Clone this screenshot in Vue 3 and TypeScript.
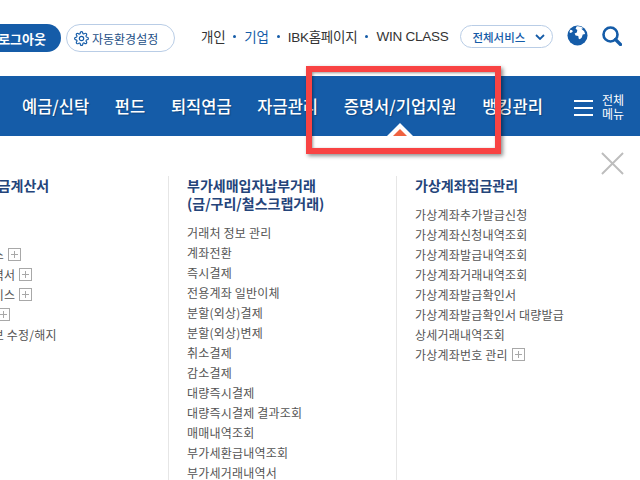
<script setup lang="ts">
interface MenuItem {
  name: string;
  more?: boolean;
}

interface MenuColumn {
  title: string[];
  items: MenuItem[];
}

const navItems = ['예금/신탁', '펀드', '퇴직연금', '자금관리', '증명서/기업지원', '뱅킹관리'];

const columns: MenuColumn[] = [
  {
    title: ['전자세금계산서'],
    items: [
      { name: '발행' },
      { name: '조회' },
      { name: '웹서비스', more: true },
      { name: '거래내역서', more: true },
      { name: '전자서비스', more: true },
      { name: '담당자', more: true },
      { name: '기본정보 수정/해지' },
    ],
  },
  {
    title: ['부가세매입자납부거래', '(금/구리/철스크랩거래)'],
    items: [
      { name: '거래처 정보 관리' },
      { name: '계좌전환' },
      { name: '즉시결제' },
      { name: '전용계좌 일반이체' },
      { name: '분할(외상)결제' },
      { name: '분할(외상)변제' },
      { name: '취소결제' },
      { name: '감소결제' },
      { name: '대량즉시결제' },
      { name: '대량즉시결제 결과조회' },
      { name: '매매내역조회' },
      { name: '부가세환급내역조회' },
      { name: '부가세거래내역서' },
    ],
  },
  {
    title: ['가상계좌집금관리'],
    items: [
      { name: '가상계좌추가발급신청' },
      { name: '가상계좌신청내역조회' },
      { name: '가상계좌발급내역조회' },
      { name: '가상계좌거래내역조회' },
      { name: '가상계좌발급확인서' },
      { name: '가상계좌발급확인서 대량발급' },
      { name: '상세거래내역조회' },
      { name: '가상계좌번호 관리', more: true },
    ],
  },
];
</script>

<template>
  <div class="page">
    <!-- Top utility bar -->
    <header class="top">
      <button type="button" class="logout">로그아웃</button>
      <button type="button" class="settings">
        <svg class="gear" viewBox="0 0 24 24" fill="none" stroke="#155ca8" stroke-width="1.9">
          <circle cx="12" cy="12" r="3.5" />
          <path d="M19.4 15a1.65 1.65 0 0 0 .33 1.82l.06.06a2 2 0 0 1 0 2.83 2 2 0 0 1-2.83 0l-.06-.06a1.65 1.65 0 0 0-1.82-.33 1.65 1.65 0 0 0-1 1.51V21a2 2 0 0 1-2 2 2 2 0 0 1-2-2v-.09A1.65 1.65 0 0 0 9 19.4a1.65 1.65 0 0 0-1.82.33l-.06.06a2 2 0 0 1-2.83 0 2 2 0 0 1 0-2.83l.06-.06a1.65 1.65 0 0 0 .33-1.82 1.65 1.65 0 0 0-1.51-1H3a2 2 0 0 1-2-2 2 2 0 0 1 2-2h.09A1.65 1.65 0 0 0 4.6 9a1.65 1.65 0 0 0-.33-1.82l-.06-.06a2 2 0 0 1 0-2.83 2 2 0 0 1 2.83 0l.06.06a1.65 1.65 0 0 0 1.82.33H9a1.65 1.65 0 0 0 1-1.51V3a2 2 0 0 1 2-2 2 2 0 0 1 2 2v.09a1.65 1.65 0 0 0 1 1.51 1.65 1.65 0 0 0 1.82-.33l.06-.06a2 2 0 0 1 2.83 0 2 2 0 0 1 0 2.83l-.06.06a1.65 1.65 0 0 0-.33 1.82V9a1.65 1.65 0 0 0 1.51 1H21a2 2 0 0 1 2 2 2 2 0 0 1-2 2h-.09a1.65 1.65 0 0 0-1.51 1z" />
        </svg>
        <span>자동환경설정</span>
      </button>
      <nav class="links">
        <a>개인</a>
        <i class="dot"></i>
        <a class="on">기업</a>
        <i class="dot"></i>
        <a>IBK홈페이지</a>
        <i class="dot"></i>
        <a>WIN CLASS</a>
      </nav>
      <button type="button" class="services">
        <span>전체서비스</span>
        <svg viewBox="0 0 10 6" class="chev" fill="none" stroke="#155ca8" stroke-width="1.8">
          <polyline points="1 1 5 5 9 1" />
        </svg>
      </button>
      <svg class="globe" viewBox="0 0 22 22">
        <circle cx="11" cy="11" r="10.5" fill="#155ca8" />
        <path d="M10 1.500c2.500-.5 5 .3 7 1.800l-2 .7 3 2.500 1 3-2.500.5-1 3-2 2-1.200-.7-.5-2.800-2.800-.5-1-2.200 2.300-1 .5-2.500-1.800-1.300z" fill="#fff" />
        <path d="M3.500 5l2 .5.500 1.500-2 1.500-1.500-1z" fill="#fff" />
      </svg>
      <svg class="search" viewBox="0 0 20 20" fill="none" stroke="#155ca8">
        <circle cx="8.5" cy="8.5" r="7" stroke-width="2.6" />
        <path d="M13.5 13.500l5 5" stroke-width="3.2" stroke-linecap="round" />
      </svg>
    </header>

    <!-- Main navigation -->
    <nav class="gnb">
      <a v-for="item in navItems" :key="item" class="gnb-item">{{ item }}</a>
      <div class="all-menu">
        <span class="burger"><i></i><i></i><i></i></span>
        <span class="all-label">전체<br />메뉴</span>
      </div>
      <span class="pointer"></span>
    </nav>

    <!-- Dropdown panel -->
    <section class="panel">
      <div v-for="col in columns" :key="col.title[0]" class="col">
        <h3 class="col-title">
          <span v-for="line in col.title" :key="line">{{ line }}</span>
        </h3>
        <ul class="col-list">
          <li v-for="item in col.items" :key="item.name">
            {{ item.name }}
            <svg v-if="item.more" class="plus" viewBox="0 0 13 13" fill="none" stroke="#a8a8a8">
              <rect x=".5" y=".5" width="12" height="12" />
              <path d="M6.500 3v7M3 6.500h7" />
            </svg>
          </li>
        </ul>
      </div>
      <svg class="close" viewBox="0 0 24 24" fill="none" stroke="#bdbdbd" stroke-width="2">
        <path d="M1 1l22 22M23 1L1 23" />
      </svg>
    </section>

    <!-- Annotation frame over the screenshot -->
    <div class="mark"></div>
  </div>
</template>

<style>
html,
body {
  margin: 0;
  background: #fff;
}
</style>

<style scoped>
.page {
  position: relative;
  width: 640px;
  height: 480px;
  overflow: hidden;
  background: #fff;
  font-family: "Noto Sans CJK KR", "Liberation Sans", sans-serif;
  color: #333;
}

button {
  font-family: inherit;
  padding: 0;
  cursor: pointer;
}

/* Top bar */
.top {
  height: 76px;
  box-sizing: border-box;
  padding-top: 24px;
  display: flex;
  align-items: flex-start;
}

.logout {
  width: 81px;
  height: 28px;
  margin-left: -20px;
  flex-shrink: 0;
  border: 0;
  border-radius: 0 14px 14px 0;
  background: #155ca8;
  color: #fff;
  font-size: 13px;
  font-weight: 700;
  text-align: right;
  padding-right: 15px;
}

.settings {
  width: 109px;
  height: 28px;
  margin-left: 5px;
  flex-shrink: 0;
  display: flex;
  align-items: center;
  gap: 3px;
  padding-left: 7px;
  box-sizing: border-box;
  border: 1px solid #b9cde6;
  border-radius: 14px;
  background: #fff;
  color: #244f86;
  font-size: 12px;
}

.gear {
  width: 15px;
  height: 15px;
  flex-shrink: 0;
}

.links {
  margin-left: 26px;
  height: 24px;
  display: flex;
  align-items: center;
  gap: 7px;
  font-family: "Liberation Sans", "Noto Sans CJK KR", sans-serif;
  font-size: 13.5px;
  letter-spacing: -0.25px;
  color: #333;
  white-space: nowrap;
}

.links .on {
  color: #155ca8;
}

.dot {
  width: 3px;
  height: 3px;
  margin: 0 1px;
  border-radius: 50%;
  background: #155ca8;
}

.services {
  width: 93px;
  height: 23px;
  margin: 1px 0 0 12px;
  flex-shrink: 0;
  display: flex;
  align-items: center;
  gap: 10px;
  padding-left: 11px;
  box-sizing: border-box;
  border: 1px solid #b9cde6;
  border-radius: 12px;
  background: #fff;
  color: #155ca8;
  font-size: 11.5px;
  font-weight: 500;
}

.chev {
  width: 10px;
  height: 6px;
}

.globe {
  width: 21px;
  height: 21px;
  margin: 1px 0 0 14px;
  flex-shrink: 0;
}

.search {
  width: 20px;
  height: 20px;
  margin: 2px 0 0 14px;
  flex-shrink: 0;
}

/* Main nav */
.gnb {
  position: relative;
  height: 60px;
  padding-left: 22px;
  display: flex;
  align-items: center;
  gap: 25.7px;
  background: #155ca8;
}

.gnb-item {
  color: #fff;
  font-size: 16.5px;
  font-weight: 500;
  white-space: nowrap;
  text-shadow: 1px 1px 1px rgba(0, 0, 0, 0.25);
}

.all-menu {
  margin-left: auto;
  margin-right: 16px;
  display: flex;
  align-items: center;
  gap: 9px;
  color: #fff;
}

.burger {
  width: 19px;
  margin-top: 4px;
  display: flex;
  flex-direction: column;
  gap: 5px;
}

.burger i {
  height: 2px;
  background: #fff;
}

.all-label {
  margin-top: 2px;
  font-size: 12px;
  line-height: 14px;
  text-align: center;
}

/* Little marker below the active item */
.pointer {
  position: absolute;
  left: 387px;
  bottom: 0;
  width: 0;
  height: 0;
  border-left: 13px solid transparent;
  border-right: 13px solid transparent;
  border-bottom: 13px solid #fff;
}

.pointer::after {
  content: "";
  position: absolute;
  left: -7px;
  top: 6px;
  width: 0;
  height: 0;
  border-left: 7px solid transparent;
  border-right: 7px solid transparent;
  border-bottom: 7px solid #ef6240;
}

/* Dropdown panel */
.panel {
  position: relative;
  height: 344px;
  box-sizing: border-box;
  padding-top: 40px;
  margin-left: -60px;
  display: grid;
  grid-template-columns: repeat(3, 228px);
}

.col {
  border-left: 1px solid #e6e6e6;
  padding-left: 18px;
}

.col:first-child {
  border-left: 0;
  padding-left: 19px;
}

.col-title {
  margin: 0 0 10px;
  font-size: 14px;
  font-weight: 700;
  line-height: 18px;
  color: #24447a;
}

.col-title span {
  display: block;
  white-space: nowrap;
}

.col-list {
  margin: 0;
  padding: 0;
  list-style: none;
}

.col-list li {
  height: 20px;
  display: flex;
  align-items: center;
  gap: 4px;
  font-size: 12px;
  letter-spacing: 0.2px;
  color: #555;
  white-space: nowrap;
}

.plus {
  width: 13px;
  height: 13px;
  flex-shrink: 0;
}

.close {
  position: absolute;
  left: 661px;
  top: 16px;
  width: 23px;
  height: 23px;
}

/* Red annotation frame */
.mark {
  position: absolute;
  left: 306px;
  top: 66px;
  width: 195px;
  height: 88px;
  box-sizing: border-box;
  border: 6px solid #f84343;
  box-shadow: 2px 2px 4px rgba(0, 0, 0, 0.45), inset 1px 1px 3px rgba(0, 0, 0, 0.4);
}
</style>
